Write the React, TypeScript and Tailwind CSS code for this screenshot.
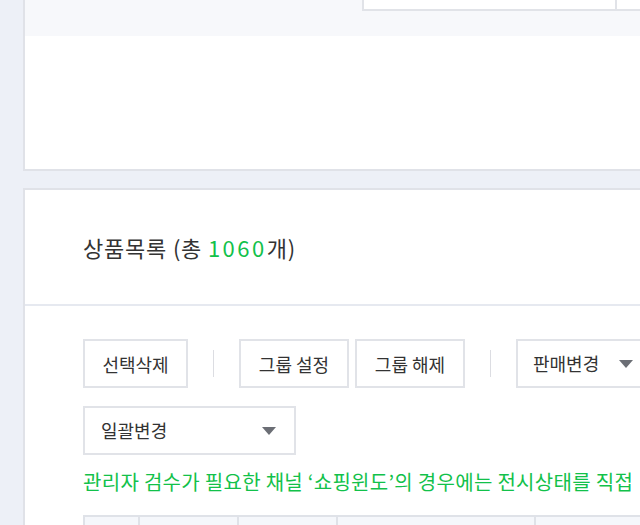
const font = { fontFamily: '"Noto Sans CJK KR", "Noto Sans", sans-serif' }

const Caret = () => (
  <svg width="14" height="8" viewBox="0 0 14 8" className="shrink-0">
    <path d="M0 0 H14 L7 8 Z" fill="#6b6e75" />
  </svg>
)

const Btn = ({ label, w }: { label: string; w: string }) => (
  <button className={`${w} h-[49px] border-2 border-[#e1e3e8] bg-white text-[18px] text-[#333] leading-none`}>
    {label}
  </button>
)

const Sep = () => <div className="w-px h-[27px] bg-[#dcdde2] mx-[25px]" />

export default function App() {
  return (
    <div className="h-[525px] overflow-hidden bg-[#edf0f7] pl-[23px]" style={font}>
      {/* upper card, top cut off */}
      <div className="border-l-2 border-b-2 border-[#e0e2e8] bg-white">
        <div className="h-[36px] bg-[#f7f8fb] flex">
          <div className="ml-[337px] w-[255px] h-[11px] bg-white border-x-2 border-b-2 border-[#e1e3e8]" />
          <div className="flex-1 h-[11px] bg-white border-b-2 border-[#e1e3e8]" />
        </div>
        <div className="h-[133px]" />
      </div>

      {/* product list card */}
      <div className="mt-[17px] border-l-2 border-t-2 border-[#e0e2e8] bg-white">
        <div className="h-[114px] flex items-center pl-[58px] text-[22px] tracking-[0.8px] text-[#333]">
          상품목록 (총&nbsp;<span className="text-[#12c14a] tracking-[2.5px]">1060</span>개)
        </div>
        <div className="h-[2px] bg-[#e6e9f0]" />
        <div className="pl-[58px] pt-[33px]">
          <div className="flex items-center">
            <Btn label="선택삭제" w="w-[105px]" />
            <Sep />
            <Btn label="그룹 설정" w="w-[110px]" />
            <div className="w-[6px]" />
            <Btn label="그룹 해제" w="w-[110px]" />
            <Sep />
            <div className="h-[49px] flex-1 border-2 border-r-0 border-[#e1e3e8] flex items-center pl-[15px] gap-[20px] text-[18px] text-[#333] whitespace-nowrap">
              판매변경
              <Caret />
            </div>
          </div>
          <div className="mt-[18px] w-[213px] h-[49px] border-2 border-[#e1e3e8] flex items-center justify-between pl-[16px] pr-[18px] text-[18px] text-[#333]">
            일괄변경
            <Caret />
          </div>
          <div className="mt-[14px] text-[20px] tracking-[0.3px] leading-[26px] text-[#12c14a] whitespace-nowrap">
            관리자 검수가 필요한 채널 ‘쇼핑윈도’의 경우에는 전시상태를 직접
          </div>
          <div className="mt-[20px] flex h-[40px] border-2 border-r-0 border-b-0 border-[#dfe2e8] bg-[#f5f7fb]">
            <div className="w-[55px] border-r-2 border-[#dfe2e8]" />
            <div className="w-[99px] border-r-2 border-[#dfe2e8]" />
            <div className="w-[99px] border-r-2 border-[#dfe2e8]" />
            <div className="w-[198px] border-r-2 border-[#dfe2e8]" />
            <div className="flex-1" />
          </div>
        </div>
      </div>
    </div>
  )
}
